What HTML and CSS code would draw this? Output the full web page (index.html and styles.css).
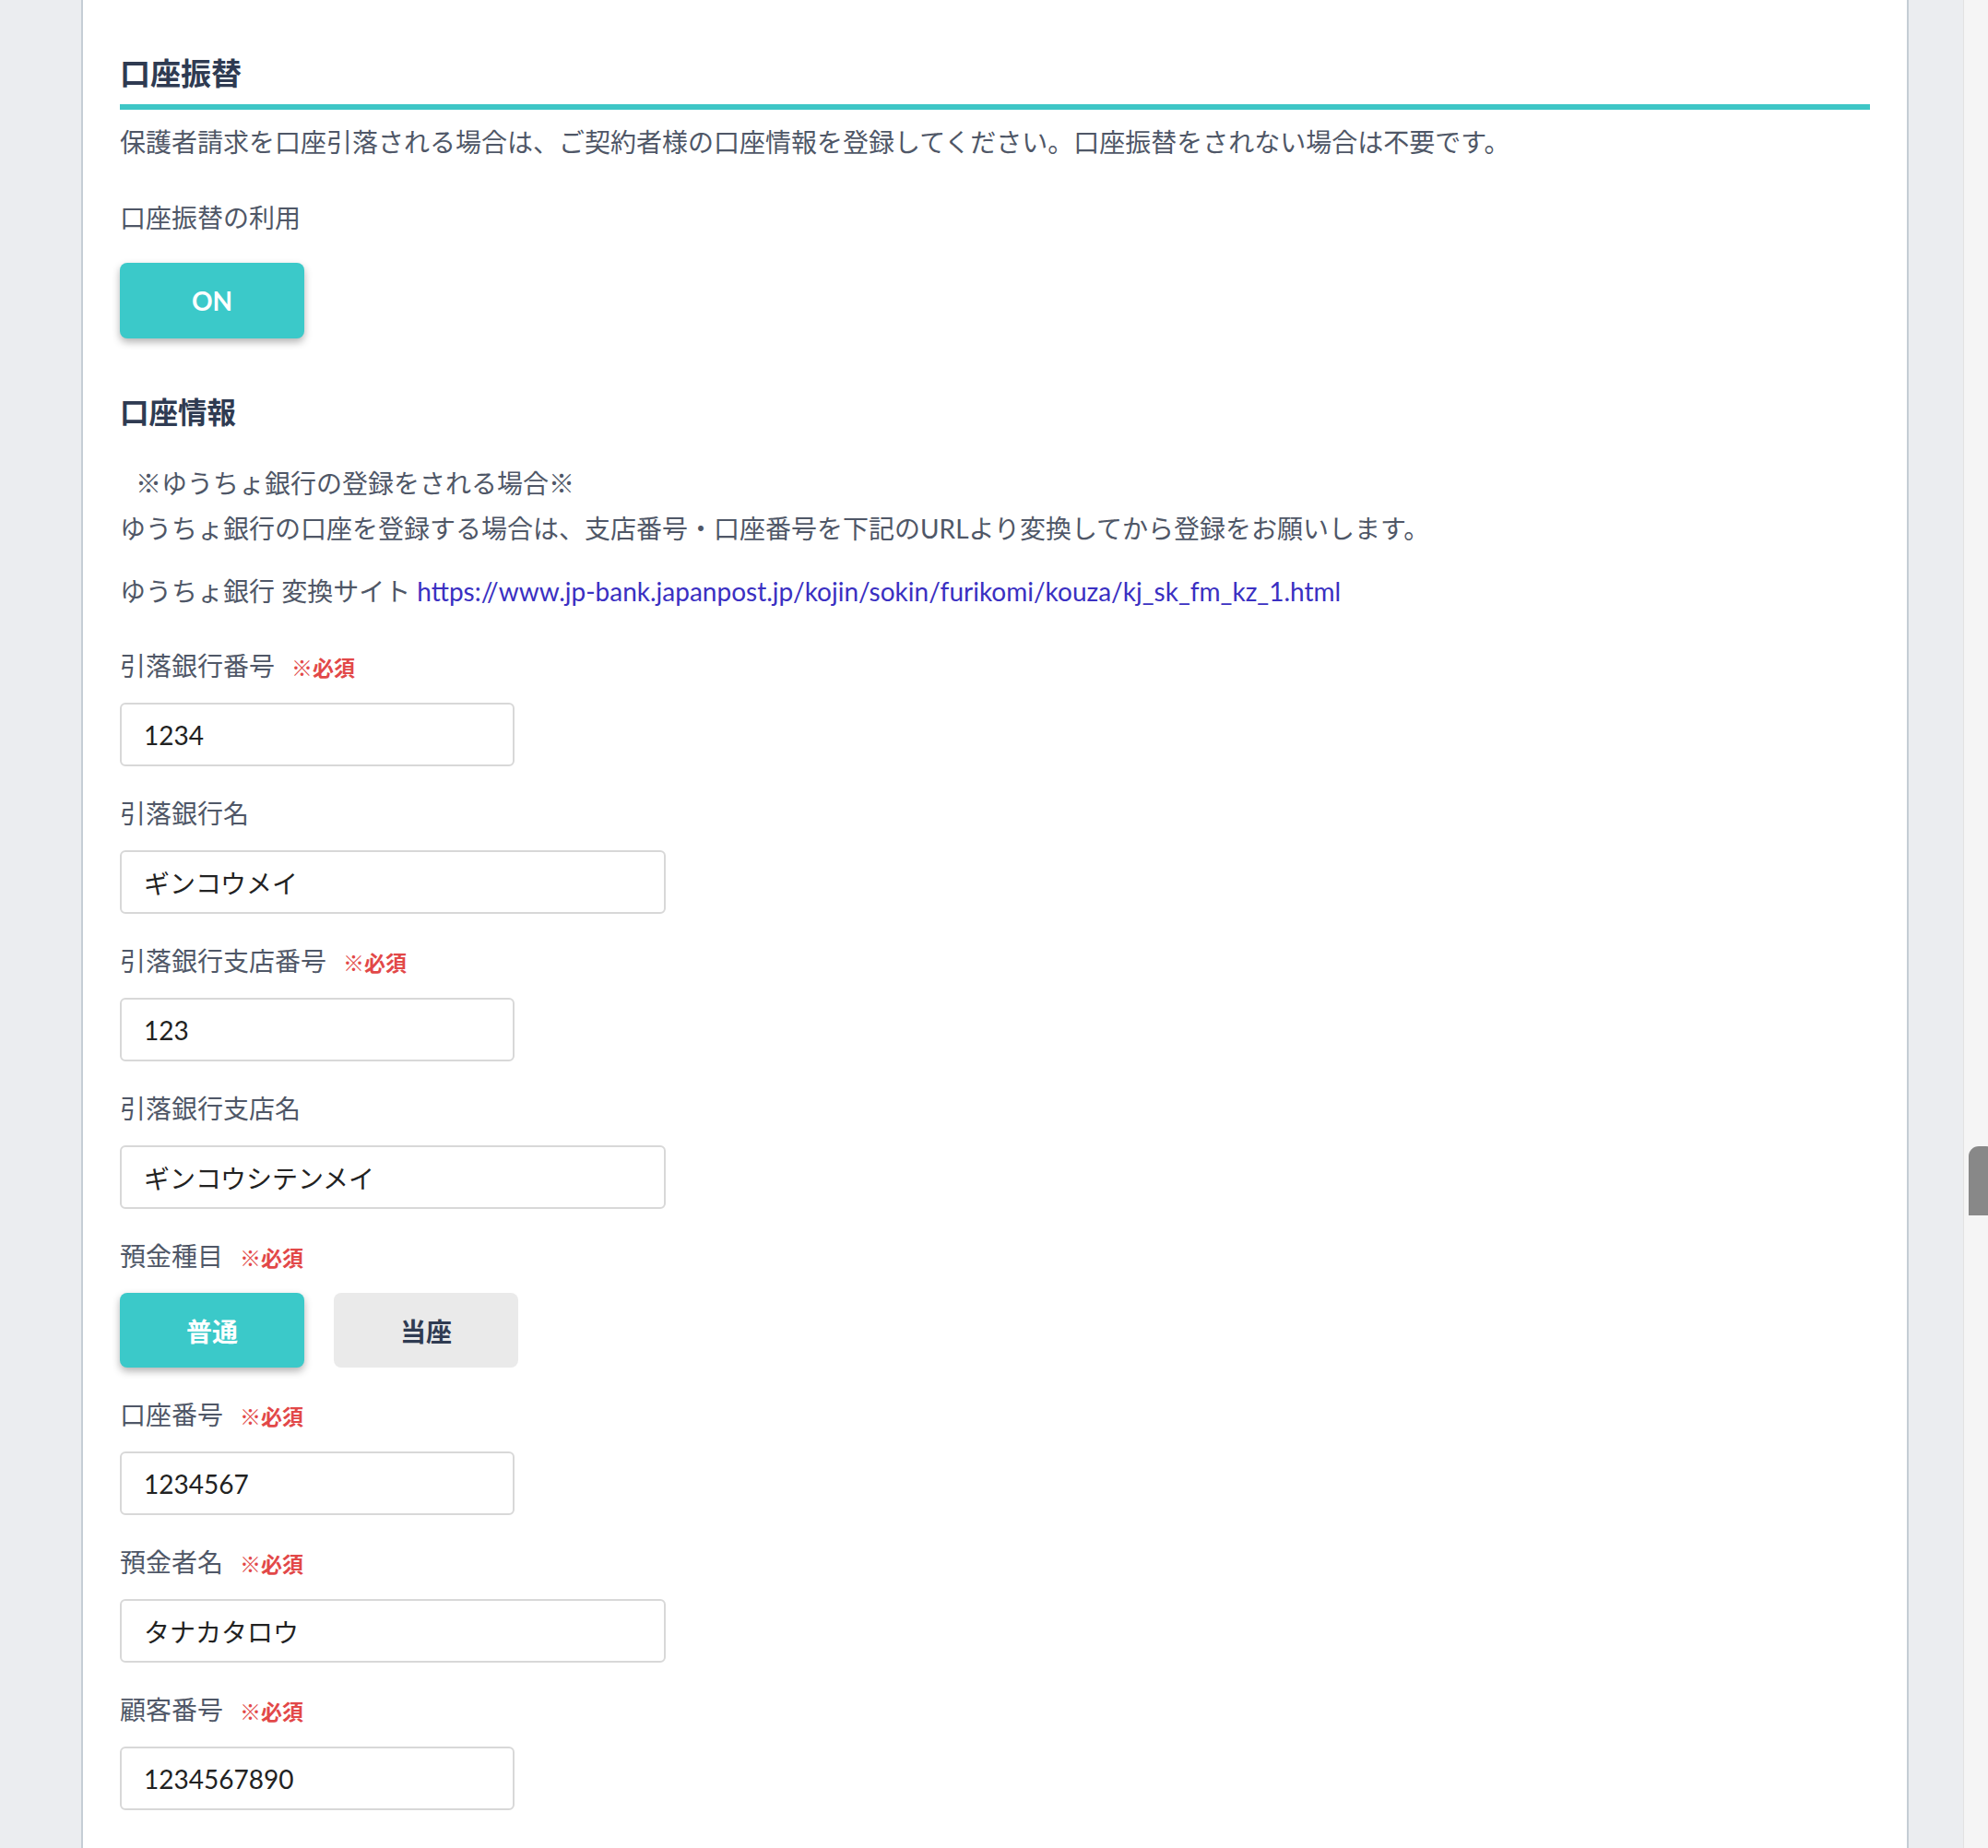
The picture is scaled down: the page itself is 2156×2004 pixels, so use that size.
FILE: index.html
```html
<!DOCTYPE html>
<html lang="ja">
<head>
    <meta charset="UTF-8">
    <meta name="viewport" content="width=device-width, initial-scale=1.0">
    <title>口座振替</title>
    <link rel="stylesheet" href="styles.css">
</head>
<body>
    <div class="page">
        <!-- Main card -->
        <div class="card">
            <h2 class="section-title">口座振替</h2>
            <p class="desc">保護者請求を口座引落される場合は、ご契約者様の口座情報を登録してください。口座振替をされない場合は不要です。</p>

            <div class="label use-label">口座振替の利用</div>
            <button class="toggle-btn active">ON</button>

            <h3 class="sub-title">口座情報</h3>
            <p class="note">※ゆうちょ銀行の登録をされる場合※</p>
            <p class="note-body">ゆうちょ銀行の口座を登録する場合は、支店番号・口座番号を下記のURLより変換してから登録をお願いします。</p>
            <p class="note-link">ゆうちょ銀行 変換サイト <a href="#">https://www.jp-bank.japanpost.jp/kojin/sokin/furikomi/kouza/kj_sk_fm_kz_1.html</a></p>

            <div class="fields">
                <div class="field">
                    <div class="label">引落銀行番号<span class="required">※必須</span></div>
                    <input type="text" class="input short" value="1234">
                </div>
                <div class="field">
                    <div class="label">引落銀行名</div>
                    <input type="text" class="input wide" value="ギンコウメイ">
                </div>
                <div class="field">
                    <div class="label">引落銀行支店番号<span class="required">※必須</span></div>
                    <input type="text" class="input short" value="123">
                </div>
                <div class="field">
                    <div class="label">引落銀行支店名</div>
                    <input type="text" class="input wide" value="ギンコウシテンメイ">
                </div>
                <div class="field">
                    <div class="label">預金種目<span class="required">※必須</span></div>
                    <div class="btn-group">
                        <button class="toggle-btn active">普通</button>
                        <button class="toggle-btn">当座</button>
                    </div>
                </div>
                <div class="field">
                    <div class="label">口座番号<span class="required">※必須</span></div>
                    <input type="text" class="input short" value="1234567">
                </div>
                <div class="field">
                    <div class="label">預金者名<span class="required">※必須</span></div>
                    <input type="text" class="input wide" value="タナカタロウ">
                </div>
                <div class="field">
                    <div class="label">顧客番号<span class="required">※必須</span></div>
                    <input type="text" class="input short" value="1234567890">
                </div>
            </div>
        </div>
    </div>

    <!-- Scrollbar -->
    <div class="scrollbar">
        <div class="scroll-thumb"></div>
    </div>
</body>
</html>
```

FILE: styles.css
```css
/* Basic styling */
html, body {
    height: 100%;
    overflow: hidden;
}
body {
    font-family: Lato, "Noto Sans CJK JP", sans-serif;
    margin: 0;
    padding: 0;
    background-color: #ebedf0;
    color: #4f5767;
    display: flex;
}
.page {
    flex: 1;
    padding: 0 59px 0 88px;
}
.card {
    background-color: #fff;
    border-left: 2px solid #c5cdd5;
    border-right: 2px solid #c5cdd5;
    min-height: 2100px;
    padding: 56px 40px 0 40px;
    font-size: 28px;
    line-height: 40px;
}
.section-title {
    margin: 0;
    font-size: 33px;
    line-height: 46px;
    font-weight: bold;
    color: #2f3b52;
    padding-bottom: 11px;
    border-bottom: 6px solid #3ec6c6;
}
.desc {
    margin: 15px 0 0 0;
}
.label {
    color: #4f5767;
    height: 40px;
}
.use-label {
    margin-top: 42px;
}
/* Buttons */
.toggle-btn {
    display: block;
    width: 200px;
    height: 82px;
    border: none;
    border-radius: 8px;
    background-color: #eaeaea;
    color: #2f3b52;
    font-family: Lato, "Noto Sans CJK JP", sans-serif;
    font-size: 28px;
    font-weight: bold;
    cursor: pointer;
    padding: 0;
}
.toggle-btn.active {
    background-color: #3bc9c9;
    color: #fff;
    box-shadow: 0 4px 8px rgba(0, 0, 0, 0.3);
}
.use-label + .toggle-btn {
    margin-top: 29px;
}
.sub-title {
    margin: 58px 0 0 0;
    font-size: 31.5px;
    line-height: 44px;
    font-weight: bold;
    color: #2f3b52;
}
.note {
    margin: 35px 0 0 0;
    padding-left: 17px;
}
.note-body {
    margin: 9px 0 0 0;
}
.note-link {
    margin: 28px 0 0 0;
}
.note-link a {
    color: #3a30c2;
    text-decoration: none;
}
/* Form fields */
.fields {
    margin-top: 41px;
}
.field {
    margin-bottom: 31px;
}
.required {
    color: #e24848;
    font-weight: bold;
    font-size: 23px;
    margin-left: 18px;
}
.input {
    display: block;
    box-sizing: border-box;
    margin-top: 20px;
    height: 69px;
    padding: 0 24px;
    border: 2px solid #d8d8d8;
    border-radius: 6px;
    font-family: Lato, "Noto Sans CJK JP", sans-serif;
    font-size: 28px;
    color: #222;
    outline: none;
}
.input.short {
    width: 428px;
}
.input.wide {
    width: 592px;
}
.btn-group {
    display: flex;
    gap: 32px;
    margin-top: 20px;
}
.btn-group .toggle-btn {
    height: 81px;
}
/* Scrollbar */
.scrollbar {
    width: 26px;
    background-color: #f5f5f5;
    border-left: 1px solid #e2e2e2;
    overflow: hidden;
}
.scroll-thumb {
    margin: 1243px 0 0 5px;
    width: 30px;
    height: 75px;
    background-color: #888;
    border-radius: 11px 11px 0 0;
}
```
